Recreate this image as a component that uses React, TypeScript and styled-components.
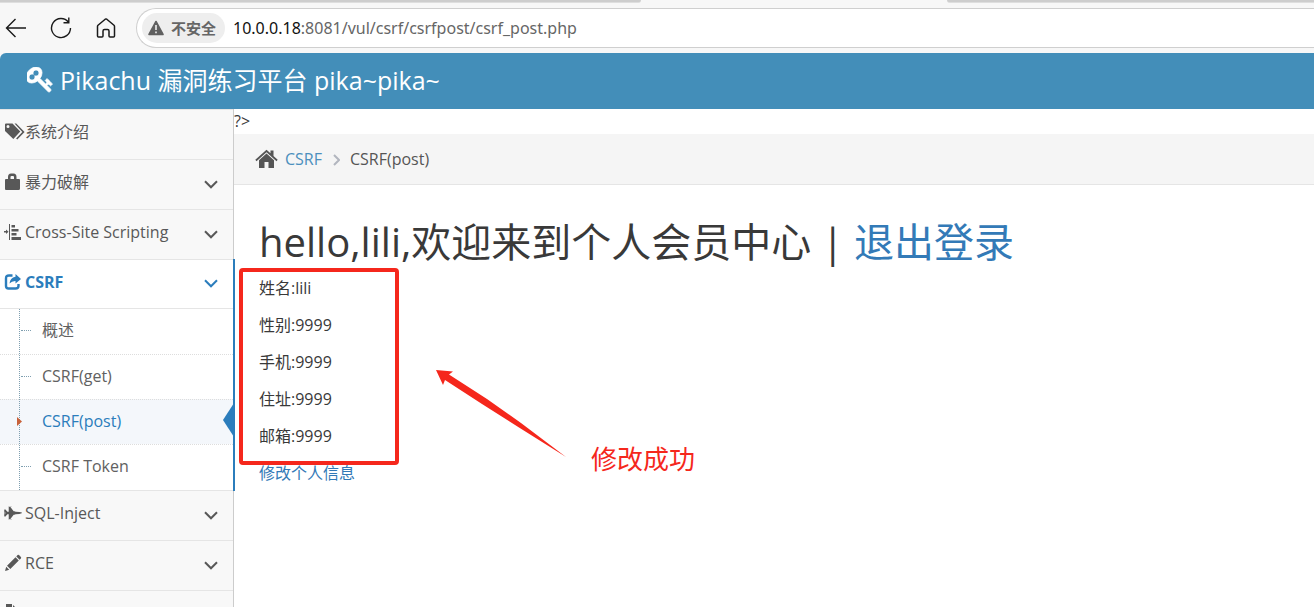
import React from "react";
import styled, { createGlobalStyle, css } from "styled-components";
import { FaFighterJet } from "react-icons/fa";

const GlobalStyle = createGlobalStyle`
  *, *::before, *::after { box-sizing: border-box; }
  html, body, #root { height: 100%; }
  body {
    margin: 0;
    overflow: hidden;
    background: #fff;
    color: #393939;
    font-family: "Open Sans", "Noto Sans CJK SC", sans-serif;
    font-size: 16px;
    line-height: 24px;
  }
  a { color: #337ab7; text-decoration: none; }
  button { font: inherit; color: inherit; background: none; border: 0; padding: 0; cursor: pointer; }
`;

const Page = styled.div`
  display: flex;
  flex-direction: column;
  height: 100vh;
  overflow: hidden;
  background: #f7f7f7;
`;

const TabStrip = styled.div`
  display: flex;
  flex: none;
  height: 8px;
  align-items: flex-start;
`;

const InactiveTabs = styled.div<{ $first?: boolean }>`
  height: 3px;
  background: #cdcdcd;
  border-bottom: 1px solid #dedede;
  ${(p) =>
    p.$first
      ? css`width: 641px; border-bottom-right-radius: 6px;`
      : css`flex: 1; margin-left: 306px; border-bottom-left-radius: 6px;`}
`;

const BrowserBar = styled.div`
  display: flex;
  flex: none;
  align-items: center;
  height: 45px;
  padding-bottom: 5px;
`;

const NavButtons = styled.div`
  display: flex;
  width: 136px;
  padding-left: 4px;
  gap: 21px;
`;

const NavButton = styled.button`
  display: grid;
  place-items: center;
  width: 24px;
  height: 24px;
  color: #1a1a1a;
`;

const AddressBox = styled.div`
  display: flex;
  align-items: center;
  flex: 1;
  height: 40px;
  padding-left: 5px;
  background: #fff;
  border: 1px solid #cfcfcf;
  border-right: 0;
  border-radius: 20px 0 0 20px;
`;

const SecurityChip = styled.button`
  display: flex;
  flex: none;
  align-items: center;
  gap: 7px;
  height: 30px;
  padding: 0 9px 0 6px;
  border-radius: 15px;
  background: #eee;
  color: #666;
  font-size: 15px;
  font-weight: 600;
  white-space: nowrap;
`;

const Url = styled.div`
  padding-left: 8px;
  font-size: 16px;
  white-space: nowrap;
  color: #666;
  font-family: "Noto Sans", "Open Sans", sans-serif;
  b { font-weight: 400; color: #111; }
`;

const Header = styled.header`
  display: flex;
  flex: none;
  align-items: center;
  gap: 7px;
  height: 56px;
  padding: 0 27px 2px;
  border-top-left-radius: 6px;
  background: #438eb9;
  color: #fff;
  font-size: 25px;
  line-height: 32px;
  white-space: nowrap;
`;

const Body = styled.div`
  display: flex;
  flex: 1;
  min-height: 0;
  background: #fff;
`;

const Sidebar = styled.nav`
  flex: none;
  width: 234px;
  background: #f8f8f8;
  border-right: 1px solid #ccc;
`;

const Menu = styled.ul`
  list-style: none;
  margin: 0;
  padding: 0;
  border-top: 1px solid #e5e5e5;
`;

const MenuItem = styled.li<{ $open?: boolean }>`
  position: relative;
  color: #585858;
  ${(p) =>
    p.$open &&
    css`
      background: #fff;
      &::after {
        content: "";
        position: absolute;
        top: -1px;
        bottom: 0;
        right: -2px;
        width: 2px;
        background: #2b7dbc;
      }
    `}
`;

const MenuHead = styled.button<{ $open?: boolean }>`
  display: flex;
  align-items: center;
  width: 100%;
  height: ${(p) => (p.$open ? 49 : 50)}px;
  padding: 0 15px 5px 4px;
  border-bottom: 1px solid #e5e5e5;
  white-space: nowrap;
  ${(p) => p.$open && css`color: #2b7dbc; font-weight: 700;`}
`;

const IconSlot = styled.span`
  display: flex;
  align-items: center;
  width: 21px;
  height: 20px;
  svg { flex: none; }
`;

const Chevron = styled.svg`
  margin: 4px 0 0 auto;
`;

const Submenu = styled.ul`
  position: relative;
  list-style: none;
  margin: 0;
  padding: 0 0 1px;
  border-bottom: 1px solid #e5e5e5;
  &::before {
    content: "";
    position: absolute;
    z-index: 1;
    top: 0;
    bottom: 0;
    left: 19px;
    border-left: 1px dotted #7f9fb0;
  }
`;

const SubItem = styled.li<{ $active?: boolean }>`
  position: relative;
  height: 45px;
  background: ${(p) => (p.$active ? "#f4f7fb" : "transparent")};
  & + & { border-top: 1px dotted #ddd; }
  a {
    display: block;
    padding: 9px 0 9px 42px;
    color: ${(p) => (p.$active ? "#2b7dbc" : "#616161")};
  }
  &::before {
    content: "";
    position: absolute;
    left: 21px;
    top: 21px;
    width: 10px;
    border-top: 1px dotted #7f9fb0;
  }
  ${(p) =>
    p.$active &&
    css`
      &::before {
        z-index: 2;
        left: 17px;
        top: 17px;
        width: 5px;
        height: 9px;
        border: 0;
        background: #c86139;
        clip-path: polygon(0 0, 100% 50%, 0 100%);
      }
      &::after {
        content: "";
        position: absolute;
        right: -1px;
        top: 3px;
        width: 11px;
        height: 34px;
        background: #2b7dbc;
        clip-path: polygon(100% 0, 0 50%, 100% 100%);
      }
    `}
`;

const Main = styled.main`
  position: relative;
  flex: 1;
  min-width: 0;
`;

const StrayText = styled.div`
  height: 25px;
`;

const Breadcrumb = styled.ol`
  display: flex;
  align-items: center;
  list-style: none;
  margin: 0;
  padding: 0 21px;
  height: 51px;
  background: #f5f5f5;
  border-bottom: 1px solid #e5e5e5;
  color: #555;
  li { display: flex; align-items: center; }
  a { color: #4c8fbd; margin-left: 7px; }
`;

const CrumbMark = styled.svg`
  margin: 2px 10px 0 11px;
`;

const Content = styled.div`
  padding: 33px 25px 0;
`;

const Title = styled.h1`
  margin: 0 0 10px;
  font-size: 40px;
  line-height: 48px;
  font-weight: 400;
  white-space: nowrap;
`;

const Info = styled.p`
  margin: 0;
  line-height: 24px;
  & + & { margin-top: 13px; }
`;

const Highlight = styled.div`
  position: absolute;
  left: 5px;
  top: 159px;
  width: 160px;
  height: 197px;
  border: 4px solid #f5271c;
  border-radius: 4px;
  pointer-events: none;
`;

const Arrow = styled.svg`
  position: absolute;
  left: 201px;
  top: 260px;
  pointer-events: none;
`;

const Note = styled.div`
  position: absolute;
  left: 357px;
  top: 334px;
  color: #f5271c;
  font-size: 26px;
  line-height: 32px;
  white-space: nowrap;
`;

const KeyIcon = () => (
  <svg width="26" height="26" viewBox="64 128 1660 1660" fill="currentColor" stroke="currentColor" strokeWidth="50" aria-hidden="true">
    <path d="M832 512q0-80-56-136t-136-56-136 56-56 136q0 42 19 83-41-19-83-19-80 0-136 56t-56 136 56 136 136 56 136-56 56-136q0-42-19-83 41 19 83 19 80 0 136-56t56-136zm851 704q0 17-49 66t-66 49q-9 0-28.5-16t-36.5-33-38.5-40-24.5-26l-96 96 220 220q28 28 28 68 0 42-39 81t-81 39q-40 0-68-28l-671-671q-176 131-365 131-163 0-265.5-102.5t-102.5-265.5q0-160 95-313t248-248 313-95q163 0 265.5 102.5t102.5 265.5q0 189-131 365l355 355 96-96q-3-3-26-24.5t-40-38.5-33-36.5-16-28.5q0-17 49-66t66-49q13 0 23 10 6 6 46 44.5t82 79.5 86.5 86 73 78 28.5 41z" />
  </svg>
);

const TagsIcon = () => (
  <svg width="21" height="18" viewBox="0 0 21 18" fill="currentColor" aria-hidden="true">
    <path fillRule="evenodd" d="M1 1.500Q1 .5 2 .5H8.500L16.300 8.500 9.300 16 1 8ZM4 2a1.500 1.500 0 1 0 0 3 1.500 1.500 0 0 0 0-3Z" />
    <path d="M10.500 .5H12.200L20.600 9 13.300 16.500 12.100 15.400 18.300 9Z" />
  </svg>
);

const LockIcon = () => (
  <svg width="17" height="18" viewBox="0 0 17 18" fill="currentColor" aria-hidden="true">
    <path fillRule="evenodd" d="M4 6V4Q4 .5 7 .5H9.500Q12.500 .5 12.500 4V6H15Q16 6 16 7V15.500Q16 17 14.500 17H2Q1 17 1 16V7Q1 6 2 6ZM6.500 6H10V4Q10 3 9 3H7.500Q6.500 3 6.500 4Z" />
  </svg>
);

const IndentIcon = () => (
  <svg width="18" height="18" viewBox="0 0 18 18" fill="currentColor" aria-hidden="true">
    <path d="M5 1H6V17H5ZM7.500 2H11V4.500H7.500ZM7.500 6H14.500V8.500H7.500ZM7.500 10H12.500V12.500H7.500ZM7.500 14H17V17H7.500ZM0 8H2V6.500L4.500 8.700 2 11V9.500H0Z" />
  </svg>
);

const ShareIcon = () => (
  <svg width="18" height="18" viewBox="0 0 18 18" aria-hidden="true">
    <path d="M8.500 2.500H5Q2 2.500 2 5.500V13Q2 15.500 4.500 15.500H11.500Q14.500 15.500 14.500 13V11" fill="none" stroke="currentColor" strokeWidth="2.400" />
    <path d="M11.500 1L17 6 11.500 10.500V8Q8 7.800 5.500 10.500 6 5 11.500 3.800Z" fill="currentColor" />
  </svg>
);

const PencilIcon = () => (
  <svg width="18" height="18" viewBox="0 0 18 18" fill="currentColor" aria-hidden="true">
    <path d="M1 17L2.200 12.800 5.200 15.800ZM3 11.700L11.500 3.200 14.800 6.500 6.300 15ZM12.300 2.400L13.600 1.100Q14.300 .5 15 1.100L16.900 3Q17.500 3.700 16.900 4.400L15.600 5.700Z" />
  </svg>
);

const BookIcon = () => (
  <svg width="18" height="18" viewBox="0 0 18 18" fill="currentColor" aria-hidden="true">
    <path d="M2 0H8V6H13V17H2ZM9 1L13 5H9Z" />
  </svg>
);

const HomeIcon = () => (
  <svg width="23" height="20" viewBox="0 0 23 20" fill="currentColor" aria-hidden="true">
    <path d="M11.500 .7L15.500 4.300V1.500H18.500V7L22.700 10.800 21.500 12.200 11.500 3.300 1.500 12.200 .3 10.800Z" />
    <path d="M11.500 4.600L19 11.200V19H13.500V13H9.500V19H4V11.200Z" />
  </svg>
);

const Down = () => (
  <Chevron width="14" height="9" viewBox="0 0 14 9" fill="none" stroke="currentColor" strokeWidth="2" aria-hidden="true">
    <path d="M1 1.300L7 7.300 13 1.300" />
  </Chevron>
);

const subItems = ["概述", "CSRF(get)", "CSRF(post)", "CSRF Token"];

const menu: { label: string; icon: React.ReactNode; leaf?: boolean; open?: boolean }[] = [
  { label: "系统介绍", icon: <TagsIcon />, leaf: true },
  { label: "暴力破解", icon: <LockIcon /> },
  { label: "Cross-Site Scripting", icon: <IndentIcon /> },
  { label: "CSRF", icon: <ShareIcon />, open: true },
  { label: "SQL-Inject", icon: <FaFighterJet size={18} /> },
  { label: "RCE", icon: <PencilIcon /> },
  { label: "File Inclusion", icon: <BookIcon /> },
];

const fields = ["姓名:lili", "性别:9999", "手机:9999", "住址:9999", "邮箱:9999"];

export default function App() {
  return (
    <Page>
      <GlobalStyle />
      <TabStrip>
        <InactiveTabs $first />
        <InactiveTabs />
      </TabStrip>
      <BrowserBar>
        <NavButtons>
          <NavButton aria-label="Back">
            <svg width="22" height="20" viewBox="0 0 22 20" fill="none" stroke="currentColor" strokeWidth="1.400">
              <path d="M21 10H2M10.500 1L1.500 10 10.500 19" />
            </svg>
          </NavButton>
          <NavButton aria-label="Refresh">
            <svg width="22" height="22" viewBox="0 0 22 22" fill="none" stroke="currentColor" strokeWidth="1.400">
              <path d="M20.500 11A9.500 9.500 0 1 1 18.500 5.200M18.800 .5V5.700H13.500" />
            </svg>
          </NavButton>
          <NavButton aria-label="Home">
            <svg width="20" height="20" viewBox="0 0 20 20" fill="none" stroke="currentColor" strokeWidth="1.500" strokeLinejoin="round">
              <path d="M1.500 8.500Q1.500 7.800 2 7.300L9.200 1.200Q10 .7 10.800 1.200L18 7.300Q18.500 7.800 18.500 8.500V18Q18.500 19 17.500 19H14Q13 19 13 18V13Q13 11.500 11.500 11.500H8.500Q7 11.500 7 13V18Q7 19 6 19H2.500Q1.500 19 1.500 18Z" />
            </svg>
          </NavButton>
        </NavButtons>
        <AddressBox>
          <SecurityChip>
            <svg width="16" height="16" viewBox="0 0 16 16" aria-hidden="true">
              <path d="M8 1.500L15 14.500H1Z" fill="#606060" stroke="#606060" strokeWidth="1.600" strokeLinejoin="round" />
              <path d="M8 5V10M8 11.500V13.200" stroke="#eee" strokeWidth="1.600" />
            </svg>
            不安全
          </SecurityChip>
          <Url>
            <b>10.0.0.18</b>:8081/vul/csrf/csrfpost/csrf_post.php
          </Url>
        </AddressBox>
      </BrowserBar>
      <Header>
        <KeyIcon />
        Pikachu 漏洞练习平台 pika~pika~
      </Header>
      <Body>
        <Sidebar>
          <Menu>
            {menu.map((m) => (
              <MenuItem key={m.label} $open={m.open}>
                <MenuHead $open={m.open}>
                  <IconSlot>{m.icon}</IconSlot>
                  {m.label}
                  {!m.leaf && <Down />}
                </MenuHead>
                {m.open && (
                  <Submenu>
                    {subItems.map((s) => (
                      <SubItem key={s} $active={s === "CSRF(post)"}>
                        <a href="#">{s}</a>
                      </SubItem>
                    ))}
                  </Submenu>
                )}
              </MenuItem>
            ))}
          </Menu>
        </Sidebar>
        <Main>
          <StrayText>?&gt;</StrayText>
          <Breadcrumb>
            <li>
              <HomeIcon />
              <a href="#">CSRF</a>
            </li>
            <li>
              <CrumbMark width="7" height="12" viewBox="0 0 7 12" fill="none" stroke="#b2b6bf" strokeWidth="2" aria-hidden="true">
                <path d="M1 1L6 6 1 11" />
              </CrumbMark>
              CSRF(post)
            </li>
          </Breadcrumb>
          <Content>
            <Title>
              hello,lili,欢迎来到个人会员中心 | <a href="#">退出登录</a>
            </Title>
            {fields.map((f) => (
              <Info key={f}>{f}</Info>
            ))}
            <Info>
              <a href="#">修改个人信息</a>
            </Info>
          </Content>
          <Highlight />
          <Arrow width="132" height="90" viewBox="0 0 132 90" fill="#f5271c" aria-hidden="true">
            <path d="M1 1L18 2.500 14 5.500 52 30 86 54 131 88 84 58.500 47 35 10 11 8 16Z" />
          </Arrow>
          <Note>修改成功</Note>
        </Main>
      </Body>
    </Page>
  );
}
